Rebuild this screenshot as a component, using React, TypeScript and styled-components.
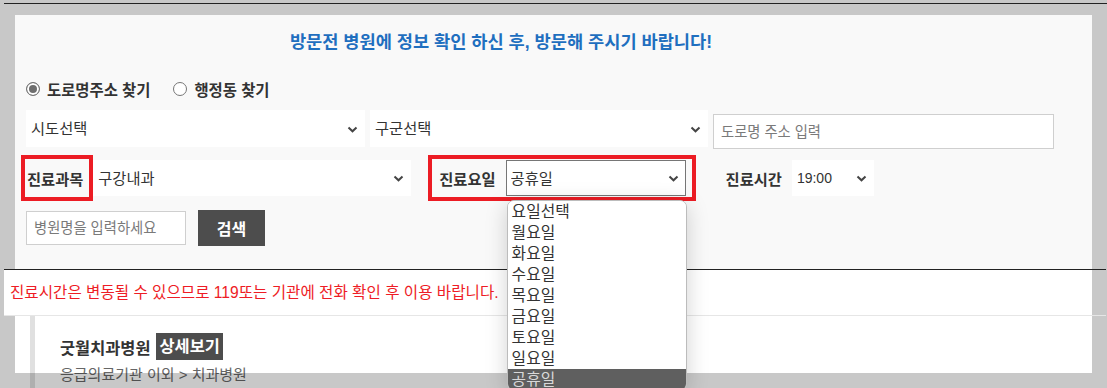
import React, { useState } from "react";
import styled, { createGlobalStyle } from "styled-components";

const GlobalStyle = createGlobalStyle`
  html, body {
    margin: 0;
    padding: 0;
    background: #c8c8c8;
  }
  body {
    font-family: "Liberation Sans", "Noto Sans CJK KR", sans-serif;
    color: #333;
  }
  * {
    box-sizing: border-box;
  }
`;

const FONT = `"Liberation Sans", "Noto Sans CJK KR", sans-serif`;

const Page = styled.div`
  width: 1107px;
  height: 388px;
  position: relative;
  overflow: hidden;
`;

const TopRule = styled.div`
  height: 1px;
  margin: 3px 0 0 4px;
  background: #222;
`;

const Frame = styled.div`
  padding: 11px 15px 0;
`;

const SearchPanel = styled.section`
  height: 254px;
  background: #f9f9f9;
  padding: 14px 38px 0 11px;
`;

const Title = styled.h2`
  margin: 0 78px 0 0;
  font-size: 17.6px;
  line-height: 26px;
  font-weight: bold;
  text-align: center;
  color: #1f6fbf;
`;

const RadioRow = styled.div`
  display: flex;
  align-items: center;
  gap: 23px;
  height: 20px;
  margin-top: 24px;
`;

const RadioLabel = styled.label`
  display: flex;
  align-items: center;
  gap: 7px;
  font-size: 15.4px;
  font-weight: bold;
  color: #333;
`;

const Radio = styled.input.attrs({ type: "radio" })`
  appearance: none;
  margin: 0;
  width: 14px;
  height: 14px;
  border-radius: 50%;
  border: 1px solid #767676;
  background: #fff;

  &:checked {
    background: #6e6e6e;
    box-shadow: inset 0 0 0 2px #fff;
  }
`;

const Row = styled.div<{ $top: number; $height: number }>`
  display: flex;
  align-items: center;
  margin-top: ${(p) => p.$top}px;
  height: ${(p) => p.$height}px;
`;

const RowOne = styled(Row)`
  align-items: flex-start;
  gap: 5px;
`;

const SelectWrap = styled.div<{ $w: number; $h: number; $open?: boolean }>`
  position: relative;
  flex: none;
  width: ${(p) => p.$w}px;
  height: ${(p) => p.$h}px;
  background: #fff;
  border: 1px solid ${(p) => (p.$open ? "#767676" : "#fff")};
`;

const NativeSelect = styled.select<{ $size: number }>`
  appearance: none;
  width: 100%;
  height: 100%;
  border: 0;
  outline: none;
  background: transparent;
  padding: 0 26px 0 4px;
  font-family: ${FONT};
  font-size: ${(p) => p.$size}px;
  color: #333;
`;

const Chevron = styled.svg`
  position: absolute;
  right: 6px;
  top: 50%;
  margin-top: -3px;
  pointer-events: none;
`;

const TextInput = styled.input<{ $w: number; $h: number; $top?: number }>`
  flex: none;
  width: ${(p) => p.$w}px;
  height: ${(p) => p.$h}px;
  margin-top: ${(p) => p.$top ?? 0}px;
  border: 1px solid #cfcfcf;
  background: #fff;
  padding: 0 7px;
  font-family: ${FONT};
  font-size: 14.3px;
  color: #333;
  outline: none;

  &::placeholder {
    color: #7a7a7a;
  }
`;

const Highlight = styled.div<{ $left?: number }>`
  display: flex;
  align-items: center;
  height: 46px;
  border: 4px solid #ec1c24;
  margin-left: ${(p) => p.$left ?? 0}px;
  padding: 0 6px 0 2px;
`;

const FieldLabel = styled.span<{ $gap?: number }>`
  flex: none;
  font-size: 15.3px;
  font-weight: bold;
  color: #333;
  margin-right: ${(p) => p.$gap ?? 0}px;
`;

const DayBox = styled(Highlight)`
  padding: 0 6px 0 7px;
`;

const TimeLabel = styled(FieldLabel)`
  margin-left: 30px;
`;

const Dropdown = styled.ul`
  position: absolute;
  z-index: 20;
  top: calc(100% + 5px);
  left: 0;
  width: 180px;
  margin: 0;
  padding: 0;
  list-style: none;
  background: #fff;
  border: 1px solid #bcbcbc;
  border-radius: 7px;
  box-shadow: 0 4px 22px rgba(0, 0, 0, 0.18);
  overflow: hidden;
`;

const Option = styled.li<{ $active?: boolean }>`
  height: 21px;
  line-height: 21px;
  padding-left: 4px;
  font-size: 15.8px;
  color: ${(p) => (p.$active ? "#d8d8d8" : "#333")};
  background: ${(p) => (p.$active ? "#5f5f5f" : "#fff")};
`;

const SearchButton = styled.button`
  flex: none;
  width: 67px;
  height: 36px;
  margin-left: 12px;
  border: 0;
  background: #4d4d4d;
  color: #fff;
  font-family: ${FONT};
  font-size: 16px;
  font-weight: bold;
`;

const DarkRule = styled.div`
  height: 1px;
  margin: 0 1px 0 4px;
  background: #222;
`;

const Notice = styled.p`
  margin: 0 15px 0 4px;
  height: 45px;
  line-height: 45px;
  padding-left: 6px;
  background: #fff;
  font-size: 15.6px;
  color: #ee1c25;
  white-space: nowrap;
`;

const LightRule = styled.div`
  height: 1px;
  margin: 0 1px 0 4px;
  background: #e6e6e6;
`;

const Results = styled.div`
  margin: 0 15px;
  height: 80px;
  background: #fff;
  padding-left: 15px;
`;

const Card = styled.article`
  border-left: 5px solid #e0e0e0;
  height: 80px;
  padding: 17px 0 0 25px;
`;

const CardHead = styled.div`
  display: flex;
  align-items: center;
  gap: 6px;
  height: 27px;
`;

const HospitalName = styled.strong`
  font-size: 16.4px;
  color: #333;
`;

const DetailBadge = styled.span`
  background: #4d4d4d;
  color: #fff;
  font-size: 16.4px;
  font-weight: bold;
  line-height: 27px;
  padding: 0 3px;
`;

const Category = styled.div`
  margin-top: 5px;
  font-size: 15px;
  line-height: 20px;
  color: #666;
`;

const BottomShade = styled.div`
  position: absolute;
  z-index: 10;
  left: 15px;
  right: 15px;
  bottom: 0;
  height: 15px;
  background: rgba(0, 0, 0, 0.216);
  pointer-events: none;
`;

const ChevronIcon = () => (
  <Chevron width="11" height="7" viewBox="0 0 11 7">
    <path d="M1.5 1.5l4 3.8 4-3.8" fill="none" stroke="#444" strokeWidth="2" />
  </Chevron>
);

interface SelectProps {
  w: number;
  h: number;
  value: string;
  options: string[];
  size?: number;
  open?: boolean;
  children?: React.ReactNode;
}

const Select = ({ w, h, value, options, size = 15.3, open, children }: SelectProps) => (
  <SelectWrap $w={w} $h={h} $open={open}>
    <NativeSelect $size={size} defaultValue={value}>
      {options.map((o) => (
        <option key={o}>{o}</option>
      ))}
    </NativeSelect>
    <ChevronIcon />
    {children}
  </SelectWrap>
);

const days = ["요일선택", "월요일", "화요일", "수요일", "목요일", "금요일", "토요일", "일요일", "공휴일"];

export default function App() {
  const [mode, setMode] = useState("road");

  return (
    <Page>
      <GlobalStyle />
      <TopRule />
      <Frame>
        <SearchPanel>
          <Title>방문전 병원에 정보 확인 하신 후, 방문해 주시기 바랍니다!</Title>
          <RadioRow>
            <RadioLabel>
              <Radio name="mode" checked={mode === "road"} onChange={() => setMode("road")} />
              도로명주소 찾기
            </RadioLabel>
            <RadioLabel>
              <Radio name="mode" checked={mode === "dong"} onChange={() => setMode("dong")} />
              행정동 찾기
            </RadioLabel>
          </RadioRow>

          <RowOne $top={11} $height={37}>
            <Select w={339} h={37} value="시도선택" options={["시도선택"]} />
            <Select w={338} h={37} value="구군선택" options={["구군선택"]} />
            <TextInput $w={341} $h={35} $top={4} placeholder="도로명 주소 입력" />
          </RowOne>

          <Row $top={8} $height={46}>
            <Highlight $left={-5}>
              <FieldLabel>진료과목</FieldLabel>
            </Highlight>
            <Select w={318} h={36} value="구강내과" options={["구강내과"]} />
            <DayBox $left={17}>
              <FieldLabel $gap={10}>진료요일</FieldLabel>
              <Select w={180} h={36} value="공휴일" options={days} open>
                <Dropdown>
                  {days.map((d) => (
                    <Option key={d} $active={d === "공휴일"}>
                      {d}
                    </Option>
                  ))}
                </Dropdown>
              </Select>
            </DayBox>
            <TimeLabel $gap={10}>진료시간</TimeLabel>
            <Select w={82} h={36} size={14} value="19:00" options={["19:00"]} />
          </Row>

          <Row $top={9} $height={36}>
            <TextInput $w={160} $h={34} placeholder="병원명을 입력하세요" />
            <SearchButton>검색</SearchButton>
          </Row>
        </SearchPanel>
      </Frame>
      <DarkRule />
      <Notice>진료시간은 변동될 수 있으므로 119또는 기관에 전화 확인 후 이용 바랍니다.</Notice>
      <LightRule />
      <Results>
        <Card>
          <CardHead>
            <HospitalName>굿월치과병원</HospitalName>
            <DetailBadge>상세보기</DetailBadge>
          </CardHead>
          <Category>응급의료기관 이외 &gt; 치과병원</Category>
        </Card>
      </Results>
      <BottomShade />
    </Page>
  );
}
